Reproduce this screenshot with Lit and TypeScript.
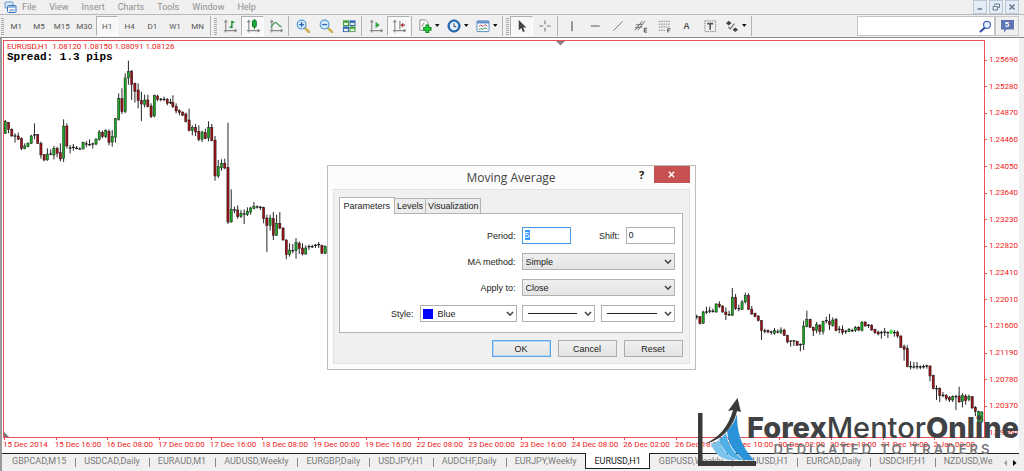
import { LitElement, html, svg, css } from "lit";
import { customElement, query } from "lit/decorators.js";
import { classMap } from "lit/directives/class-map.js";

type Kind = "r" | "g" | "d" | "l";
interface Run {
  x: number;
  y: number;
  bars: string;
}

/* Each bar: kind, body top, body bottom, wick top, wick bottom (thirds of a unit from the run's origin). */
const RUNS: Run[] = [
  {
    x: 5.3,
    y: 40,
    bars:
      "g245,280,240,282 r247,268,246,280 r268,288,265,290 d288,288,280,308 r288,298,278,300 r296,326,292,330 g318,326,310,328 g309,320,308,322 g288,310,284,312 d285,285,250,298 r283,310,282,312 r310,345,305,356 r344,360,342,364 g342,360,325,362 d342,342,328,346 g325,345,318,358 r325,340,320,352 r338,357,310,364 g258,355,238,366 r258,318,250,325 d324,324,315,340 d322,322,312,332 d325,325,318,328 d327,327,322,330 g307,327,305,328 d312,312,303,322 d314,314,298,318 d312,312,308,326 g297,312,295,316 g276,298,270,302 r277,290,272,294 g272,290,268,294 r274,308,268,316 g290,306,270,320 g236,292,234,308 g176,238,160,242 r176,215,145,222 g114,215,100,220 g94,114,62,134 r94,134,90,180 r130,154,128,188 r150,182,130,205 r182,192,155,243 g180,194,164,202 r180,200,164,202 r198,230,190,234 g166,228,164,232 r168,178,164,184 d178,178,174,184 d178,178,170,184 r178,190,174,196 d188,188,176,192",
  },
  {
    x: 172.9,
    y: 80,
    bars:
      "r68,80,46,84 r79,93,70,100 r92,97,88,106 r96,106,94,108 r102,124,98,128 r120,152,86,154 g142,152,136,166 r142,156,132,168 r154,178,136,184 g156,178,152,186 r158,176,146,178 g142,174,124,184 r142,182,132,184 r180,288,168,302 g260,288,240,294 g250,264,238,272 r250,264,236,268 r262,426,128,432 g388,426,328,428 d390,390,380,400 r390,410,376,416 g400,410,390,414 d402,402,388,432 g394,404,382,408 g384,396,380,404 g380,386,366,388 d381,381,376,386 d382,382,378,390 r382,416,380,430 r414,436,404,516 g414,436,404,452 r416,466,396,480 g430,466,404,468 r430,444,396,448 r444,480,442,482 r480,524,478,538 g510,524,490,530 d512,512,492,520 g488,512,474,536 r490,506,484,522 r504,522,490,526 g504,522,496,524 d500,500,494,510 d500,500,494,504 d496,496,492,504 d494,494,486,504 r496,520,494,522 g500,520,496,522",
  },
  {
    x: 696.7,
    y: 270,
    bars:
      "d140,140,134,148 r140,160,138,164 g126,160,122,162 d126,126,110,132 d123,123,110,130 d124,124,116,128 g102,126,100,128 r102,110,94,114 r108,126,106,128 r126,134,112,150 d134,134,122,138 g82,136,54,138 r82,116,72,120 d116,116,104,124 g96,118,90,120 g76,96,68,100 r76,118,70,120 r118,132,108,134 r130,140,128,142 r138,152,136,154 r152,182,150,210 d183,183,176,190 r182,186,178,190 d186,186,182,194 g182,190,174,194 d186,186,178,190 g180,188,172,192 r180,196,176,198 r196,216,194,220 d213,213,212,230 d213,213,210,228 r214,226,212,228 d224,224,220,244 g168,224,152,240 g148,170,122,172 r148,172,146,174 r172,182,170,198 g164,182,156,190 r166,184,162,194 g154,184,152,194 d152,152,140,160 r154,164,132,180 g150,166,142,170 r148,182,144,184 d178,178,168,190 r178,188,166,194 d184,184,180,192 g178,184,174,186 d182,182,176,186 g172,182,168,186 r172,180,168,184 g156,182,154,184 r156,168,154,170 d166,166,162,174",
  },
  {
    x: 871.7,
    y: 300,
    bars:
      "r76,90,72,92 r88,98,86,102 r96,102,92,106 d98,98,92,116 d96,96,84,108 d98,98,94,114 l92,100,88,102 d98,98,90,110 r96,108,92,114 r108,142,106,144 r140,148,134,182 r146,200,136,202 d200,200,184,208 d201,201,186,206 d200,200,186,208 d201,201,196,208 d200,200,194,206 d198,198,194,206 r198,228,196,244 r226,266,224,268 d266,266,256,300 r266,286,262,306 d286,286,276,292 r286,296,282,302 r292,300,288,306 g290,300,286,306 d290,290,284,330 r288,306,260,308 g286,304,280,322 r288,302,282,314 g290,298,284,304 r290,324,288,326 r322,334,318,348 g334,366,332,368 g336,364,334,368",
  },
];

const STEP = 3.24;
const FILL: Record<Kind, string> = { r: "#9c1317", g: "#19a822", d: "#000", l: "#2fdc3a" };

const candles = RUNS.flatMap((run) =>
  run.bars.split(" ").map((bar, i) => {
    const kind = bar[0] as Kind;
    const [top, bottom, high, low] = bar.slice(1).split(",").map((n) => run.y + Number(n) / 3);
    const x = run.x + i * STEP;
    const edge = kind === "l" ? "#2fdc3a" : "#111";
    return svg`
      <line x1=${x} x2=${x} y1=${high} y2=${low} stroke=${edge} stroke-width="0.9"></line>
      ${kind === "d"
        ? svg`<line x1=${x - 1.4} x2=${x + 1.4} y1=${top} y2=${top} stroke="#111" stroke-width="1.2"></line>`
        : svg`<rect x=${x - 1.1} y=${top} width="2.2" height=${Math.max(bottom - top, 1)}
              fill=${FILL[kind]} stroke=${edge} stroke-width="0.45"></rect>`}`;
  })
);

const PRICES = [
  "1.25690", "1.25280", "1.24870", "1.24460", "1.24050", "1.23640", "1.23230", "1.22820",
  "1.22410", "1.22010", "1.21600", "1.21190", "1.20780", "1.20370", "1.19960",
];
const TIMES = [
  "15 Dec 2014", "15 Dec 16:00", "16 Dec 08:00", "17 Dec 00:00", "17 Dec 16:00", "18 Dec 08:00",
  "19 Dec 00:00", "19 Dec 16:00", "22 Dec 08:00", "23 Dec 00:00", "23 Dec 16:00", "24 Dec 08:00",
  "26 Dec 02:00", "26 Dec 18:00", "29 Dec 10:00", "30 Dec 02:00", "30 Dec 18:00", "31 Dec 10:00",
  "2 Jan 03:00",
];
const TABS = [
  "GBPCAD,M15", "USDCAD,Daily", "EURAUD,M1", "AUDUSD,Weekly", "EURGBP,Daily", "USDJPY,H1",
  "AUDCHF,Daily", "EURJPY,Weekly", "EURUSD,H1", "GBPUSD,Weekly", "XAUUSD,H1", "EURCAD,Daily",
  "USDCHF,H1", "NZDUSD,We",
];
const MENUS = ["File", "View", "Insert", "Charts", "Tools", "Window", "Help"];
const FRAMES = ["M1", "M5", "M15", "M30", "H1", "H4", "D1", "W1", "MN"];

const axes = svg`<path d="M3 1.5v13M1 12.500h13.500M1.500 3.500 3 1.500l1.500 2M12.500 11l2 1.500-2 1.500" fill="none" stroke="#8a8a8a" stroke-width="1.2"/>`;

const ICONS = {
  bars: svg`${axes}<path d="M9.500 2v8M9.500 3.500h2.500M7 8.500h2.500" fill="none" stroke="#1b8c33" stroke-width="1.500"/>`,
  candle: svg`${axes}<path d="M9 0v11" stroke="#0d6b20"/><rect x="7" y="1.500" width="4" height="7" rx="1" fill="#18b03a" stroke="#0d6b20"/>`,
  line: svg`${axes}<path d="M2 9C5 3.500 7 3 9 5s2.500 3 4.500 3.500" fill="none" stroke="#4b9a5c" stroke-width="1.300"/>`,
  zoomIn: svg`<path d="m9.500 9.500 4.500 4.500" stroke="#d0b34f" stroke-width="3" stroke-linecap="round"/><circle cx="6" cy="6" r="4.700" fill="#d9ecfa" stroke="#5b9bd8" stroke-width="1.300"/><path d="M6 3.300v5.400M3.300 6h5.400" stroke="#2f6dba" stroke-width="1.500"/>`,
  zoomOut: svg`<path d="m9.500 9.500 4.500 4.500" stroke="#d0b34f" stroke-width="3" stroke-linecap="round"/><circle cx="6" cy="6" r="4.700" fill="#d9ecfa" stroke="#5b9bd8" stroke-width="1.300"/><path d="M3.300 6h5.400" stroke="#2f6dba" stroke-width="1.500"/>`,
  tile: svg`<rect x="1" y="1.500" width="6.500" height="6" fill="#3e9e33"/><rect x="8" y="1.500" width="6.500" height="6" fill="#2c5fb4"/><rect x="1" y="8" width="6.500" height="6" fill="#2c5fb4"/><rect x="8" y="8" width="6.500" height="6" fill="#3e9e33"/><path d="M2 4h4.500v2.500H2zM9 4h4.500v2.500H9zM2 10.500h4.500V13H2zM9 10.500h4.500V13H9z" fill="#e3efdf"/>`,
  scroll: svg`${axes}<path d="M7 3v7l4.500-3.500z" fill="#2da544"/>`,
  shift: svg`${axes}<path d="M8.500 2v9" stroke="#666"/><path d="M14 6.500h-3" stroke="#a33" stroke-width="1.300"/><path d="M12 4v5L9 6.500z" fill="#a8323a"/>`,
  add: svg`<path d="M2 1h6l2.500 2.500V12H2z" fill="#fff" stroke="#888"/><path d="M4 8c2 0 1-4 3-4" fill="none" stroke="#777"/><path d="M10 6v9M5.500 10.500h9" stroke="#0d7e1c" stroke-width="4"/><path d="M10 6.800v7.400M6.300 10.500h7.400" stroke="#25cc3d" stroke-width="2.200"/>`,
  clock: svg`<circle cx="7.500" cy="7.500" r="6.500" fill="#2873c4" stroke="#174d96"/><circle cx="7.500" cy="7.500" r="4.500" fill="#e8f3fc"/><path d="M7.500 4.500v3.300l2.500.700" fill="none" stroke="#345" stroke-width="1.100"/>`,
  template: svg`<rect x="1" y="2" width="13" height="11.500" rx="1" fill="#f7fbff" stroke="#5683bd"/><path d="M1 3.500h13" stroke="#5c8fd0" stroke-width="2.500"/><path d="m3 8 2-1.500L7.500 8l2-2 2.500 1.500" fill="none" stroke="#b44" /><path d="m3 11.500 2-1 2.500.500 2-1.500 2.500 1.500" fill="none" stroke="#2a9440"/>`,
  cursor: svg`<path d="M4 1v11l2.700-2.300L8.500 14l2-1-1.800-4h3.500z" fill="#444"/>`,
  cross: svg`<path d="M7.500 1.500v4M7.500 9.500v4M1.500 7.500h4M9.500 7.500h4" stroke="#777" stroke-width="1.200"/>`,
  vline: svg`<path d="M7.500 2.500v10.500" stroke="#555" stroke-width="1.200"/>`,
  hline: svg`<path d="M3 7.500h9.500" stroke="#666" stroke-width="1.200"/>`,
  trend: svg`<path d="m2.500 12.500 10-10" stroke="#777"/>`,
  channel: svg`<path d="m1 12 8-10M4 12l8-10M2 6.500l7-1M1 9.500l8-1" stroke="#666"/><path d="M14 10h-3v4h3M11 12h2.500" fill="none" stroke="#444"/>`,
  fibo: svg`<path d="M2 2.500h11.500M2 5.500h11.500M2 8.500h11.500M2 12h7" stroke="#777" stroke-dasharray="1.500 1"/><path d="M11.500 14.500V10.500h3M11.500 12.500h2" fill="none" stroke="#444"/>`,
  label: svg`<rect x="2" y="2" width="11.500" height="11.500" fill="none" stroke="#777" stroke-dasharray="1.500 1"/><path d="M4.500 5h6.500M7.700 5v6.500" stroke="#555" stroke-width="1.700"/>`,
  arrows: svg`<path d="M4 2 7 4.500 4 7 1 4.500zM11 9l3 2.500-3 2.500-3-2.500z" fill="#444"/><path d="m3.500 8.500 2 2L10 5" fill="none" stroke="#666" stroke-width="1.200"/>`,
};

const chevron = html`<svg class="chevron" viewBox="0 0 8 6" aria-hidden="true">
  <path d="m1 1 3 3.200L7 1" fill="none" stroke="#444" stroke-width="1.600" />
</svg>`;

@customElement("mt-menu-bar")
class MtMenuBar extends LitElement {
  static styles = css`
    :host { display: block; font: 9px/14px Roboto, sans-serif; color: #8f8f8f; background: #f0f0f0; }
    .bar { display: flex; align-items: center; height: 14px; padding: 0 5px 0 4px; border-bottom: 1px solid #b8b8b8; }
    .logo { width: 13px; height: 13px; margin-right: 5px; }
    .item { padding: 0; margin-right: 13px; border: 0; background: none; font: inherit; color: inherit; }
    .grow { flex: 1; }
    .win { box-sizing: border-box; display: grid; place-items: center; width: 14px; height: 14px; margin-left: 2px; padding: 0; border: 1px solid #b9c8d6; background: #e4edf5; }
    .win svg { width: 8px; height: 8px; }
  `;
  render() {
    return html`<nav class="bar">
      <svg class="logo" viewBox="0 0 13 13" aria-hidden="true">
        <rect x="1" y="1" width="8" height="6" rx="1" fill="#dcebfa" stroke="#5d95cf" />
        <rect x="3.500" y="4.500" width="8.500" height="7" rx="1" fill="#fff" stroke="#3878bd" />
        <path d="M4 6h7.500M6 8.500v2M8 8v2.500M10 8.500v1.500" stroke="#3878bd" />
      </svg>
      ${MENUS.map((m) => html`<button class="item">${m}</button>`)}
      <span class="grow"></span>
      <button class="win" aria-label="Minimize"><svg viewBox="0 0 8 8"><path d="M1.500 6h4.500" stroke="#667a8d" stroke-width="1.500" /></svg></button>
      <button class="win" aria-label="Restore"><svg viewBox="0 0 8 8"><path d="M2.500 2.500V1h5v3.500H6M1 3.500h4.500V7H1z" fill="none" stroke="#667a8d" /></svg></button>
      <button class="win" aria-label="Close"><svg viewBox="0 0 8 8"><path d="m1.500 1.500 5 5m0-5-5 5" stroke="#667a8d" stroke-width="1.600" /></svg></button>
    </nav>`;
  }
}

@customElement("mt-toolbar")
class MtToolbar extends LitElement {
  static styles = css`
    :host { display: block; background: #f0f0f0; font: 8px/20px Roboto, sans-serif; color: #555; }
    .bar { display: flex; align-items: center; height: 22px; padding-right: 5px; border-bottom: 1px solid #8c8c8c; }
    .grip { flex: none; width: 3px; height: 17px; margin: 0 1px; background: repeating-linear-gradient(#aaa 0 1px, #f0f0f0 1px 2px); }
    .frames { display: flex; width: 204px; }
    .frames button { flex: 1; }
    button { box-sizing: border-box; height: 20px; padding: 0; border: 1px solid transparent; background: none; font: inherit; color: inherit; }
    .on { border-color: #b0b0b0 #fff #fff #b0b0b0; background: #f8f8f8; }
    .tool { display: grid; place-items: center; width: 23px; }
    .drop { display: flex; align-items: center; width: 29px; padding-left: 3px; }
    .tool svg, .drop .ico { width: 14px; height: 14px; }
    .drop .arrow { width: 6px; height: 4px; margin-left: 2px; }
    .letter { font: bold 9px/18px "Liberation Sans", sans-serif; color: #555; }
    .sep { flex: none; width: 1px; height: 20px; margin: 0 2px 0 1px; background: #b4b4b4; }
    .grow { flex: 1; }
    .search { display: flex; align-items: center; width: 138px; height: 20px; box-sizing: border-box; background: #fff; border: 1px solid #c4c4c4; }
    .search input { flex: 1; min-width: 0; border: 0; padding: 0 3px; outline: 0; font: inherit; background: none; }
    .search svg { width: 13px; height: 13px; margin-right: 2px; }
    .chat { display: grid; place-items: center; width: 24px; border-color: #c8c8c8; }
    .chat svg { grid-area: 1 / 1; width: 15px; height: 14px; }
    .chat span { grid-area: 1 / 1; font: bold 8px/10px Roboto, sans-serif; color: #fff; align-self: start; margin-top: 3px; }
  `;
  tool(name: keyof typeof ICONS, label: string, on = false) {
    return html`<button class=${classMap({ tool: true, on })} aria-label=${label}>
      <svg viewBox="0 0 15 15">${ICONS[name]}</svg>
    </button>`;
  }
  drop(name: keyof typeof ICONS, label: string) {
    return html`<button class="drop" aria-label=${label}>
      <svg class="ico" viewBox="0 0 15 15">${ICONS[name]}</svg>
      <svg class="arrow" viewBox="0 0 6 4"><path d="M1 0h4.500L3.200 3z" fill="#111" /></svg>
    </button>`;
  }
  render() {
    const sep = html`<span class="sep"></span>`;
    const grip = html`<span class="grip"></span>`;
    return html`<div class="bar" role="toolbar">
      ${grip}
      <div class="frames">${FRAMES.map((f) => html`<button class=${classMap({ on: f === "H1" })}>${f}</button>`)}</div>
      ${sep}${grip}
      ${this.tool("bars", "Bar chart")}${this.tool("candle", "Candlesticks", true)}${this.tool("line", "Line chart")}
      ${sep}
      ${this.tool("zoomIn", "Zoom in")}${this.tool("zoomOut", "Zoom out")}${this.tool("tile", "Tile windows")}
      ${sep}
      ${this.tool("scroll", "Auto scroll")}${this.tool("shift", "Chart shift", true)}
      ${sep}
      ${this.drop("add", "Indicators")}${this.drop("clock", "Periods")}${this.drop("template", "Templates")}
      ${sep}${grip}
      ${this.tool("cursor", "Cursor", true)}${this.tool("cross", "Crosshair")}
      ${sep}
      ${this.tool("vline", "Vertical line")}${this.tool("hline", "Horizontal line")}${this.tool("trend", "Trendline")}
      ${this.tool("channel", "Channel")}${this.tool("fibo", "Fibonacci")}
      <button class="tool letter">A</button>
      ${this.tool("label", "Text label")}${this.drop("arrows", "Arrows")}
      ${sep}
      <span class="grow"></span>
      <label class="search">
        <input type="text" aria-label="Search" />
        <svg viewBox="0 0 13 13" aria-hidden="true">
          <path d="m6 7.500-4.500 4" stroke="#2c4fa0" stroke-width="2" stroke-linecap="round" />
          <circle cx="8" cy="4.800" r="3.500" fill="#e9f2fc" stroke="#3f68c0" stroke-width="1.300" />
        </svg>
      </label>
      <button class="chat" aria-label="Messages">
        <svg viewBox="0 0 15 14"><path d="M1 1h13v9.500H6.500L4 13.500v-3H1z" fill="#5f74b3" /></svg>
        <span>5</span>
      </button>
    </div>`;
  }
}

@customElement("mt-chart")
class MtChart extends LitElement {
  static styles = css`
    :host { display: flex; flex-direction: column; flex: 1; min-height: 0; font: 8px/10px Roboto, sans-serif; color: #f01818; background: #fff; }
    .chart { flex: 1; min-height: 0; display: grid; grid-template: minmax(0, 1fr) 15px / minmax(0, 1fr) 34px; padding: 2px 0 0 1px; }
    .plot { display: grid; grid-template: minmax(0, 1fr) / minmax(0, 1fr); border: 1px solid #e8505a; }
    .plot > * { grid-area: 1 / 1; }
    .bars { width: 100%; height: 100%; overflow: visible; }
    .info { align-self: start; justify-self: start; padding: 1px 0 0 3px; }
    .spread { font: bold 11px/11px "Liberation Mono", monospace; color: #000; margin: 0; }
    .quote { display: flex; gap: 4px; margin: 0; }
    .prices { display: flex; flex-direction: column; justify-content: space-between; margin: 0; padding: 15px 0 0; list-style: none; }
    .prices li { display: flex; align-items: center; gap: 2px; }
    .prices li::before { content: ""; width: 2px; height: 1px; background: #e8505a; }
    .times { display: flex; margin: 0; padding: 0; list-style: none; white-space: nowrap; }
    .times li { flex: 1; min-width: 0; }
    .times li::before { content: ""; display: block; width: 1px; height: 2px; margin-left: 1px; background: #e8505a; }
  `;
  render() {
    return html`<div class="chart">
      <div class="plot">
        <svg class="bars" viewBox="4 41 980 396" preserveAspectRatio="none" role="img" aria-label="Price chart">
          ${candles}
          <path d="M556 41h9l-4.500 4.500z" fill="#8b7f84" />
          <path d="M4 432v5h5z" fill="#777" />
        </svg>
        <div class="info">
          <p class="quote"><span>EURUSD,H1</span><span>1.08120 1.08150 1.08091 1.08126</span></p>
          <p class="spread">Spread: 1.3 pips</p>
        </div>
      </div>
      <ul class="prices">${PRICES.map((p) => html`<li>${p}</li>`)}</ul>
      <ul class="times">${TIMES.map((t) => html`<li>${t}</li>`)}</ul>
    </div>`;
  }
}

@customElement("mt-dialog")
class MtDialog extends LitElement {
  static styles = css`
    :host { display: block; width: 369px; font: 9px/12px "Liberation Sans", sans-serif; color: #222; }
    .dialog { box-sizing: border-box; padding: 0 5px 5px; background: #fcfcfc; border: 1px solid #bdbdbd; }
    .head { display: grid; grid-template-columns: 1fr auto 1fr; height: 23px; }
    .title { grid-column: 2; margin: 0; font: 12px/24px "Open Sans", sans-serif; color: #444; }
    .tools { display: flex; justify-content: flex-end; align-items: start; }
    .help { width: 18px; height: 17px; padding: 0; margin-right: 3px; border: 0; background: none; font: bold 11px/17px "Open Sans", sans-serif; color: #111; }
    .close { display: grid; place-items: center; width: 36px; height: 17px; padding: 0; border: 0; background: #c75050; }
    .close svg { width: 7px; height: 7px; }
    .body { padding: 7px 6px 6px 5px; background: #f0f0f0; border: 1px solid #e2e2e2; }
    .tabs { display: flex; align-items: flex-end; height: 16px; }
    .tab { box-sizing: border-box; height: 15px; padding: 0 2px; border: 1px solid #b4b4b4; border-width: 1px 1px 0 0; background: #ececec; font: inherit; line-height: 14px; color: inherit; }
    .tab.on { height: 17px; margin-bottom: -1px; padding: 0 4px 1px; border-width: 1px 1px 0; background: #fff; }
    .panel { display: grid; gap: 9px; padding: 13px 7px 10px; background: #fff; border: 1px solid #b4b4b4; }
    .row { display: flex; justify-content: flex-end; align-items: center; height: 17px; }
    .row > label { margin-right: 6px; }
    .fields { display: flex; align-items: center; justify-content: space-between; width: 153px; }
    .pair { display: flex; align-items: center; gap: 6px; }
    input, select { box-sizing: border-box; height: 17px; margin: 0; border: 1px solid #b0b0b0; border-radius: 0; background: #fff; font: inherit; color: inherit; outline: 0; }
    input { width: 49px; padding: 0 2px 1px; }
    input:focus { border-color: #4a96e0; }
    input::selection { background: #3399ff; color: #fff; }
    select { appearance: none; width: 100%; padding: 0 12px 0 3px; }
    .box { display: grid; align-items: center; flex: 1; }
    .box > * { grid-area: 1 / 1; }
    .box.tone { flex: none; width: 97px; margin-right: 5px; }
    .tone select { padding-left: 17px; }
    .filled select { background: linear-gradient(#efefef, #e4e4e4); }
    .chevron { justify-self: end; width: 8px; height: 6px; margin-right: 3px; pointer-events: none; }
    .swatch { width: 10px; height: 10px; margin-left: 3px; background: #0000ff; pointer-events: none; }
    .rule { height: 1px; margin: 0 18px 0 6px; background: #222; pointer-events: none; }
    .lines { gap: 6px; }
    .actions { display: flex; justify-content: flex-end; gap: 7px; padding-top: 7px; }
    .actions button { width: 59px; height: 17px; padding: 0; border: 1px solid #adadad; background: linear-gradient(#f0f0f0, #e4e4e4); font: inherit; color: inherit; }
    .actions .main { border-color: #5aa5ee; box-shadow: inset 0 0 0 1px #b5d8fa; }
  `;
  @query("#period") period!: HTMLInputElement;
  firstUpdated() {
    this.period.focus();
    this.period.select();
  }
  render() {
    return html`<section class="dialog" role="dialog" aria-labelledby="title">
      <header class="head">
        <h1 class="title" id="title">Moving Average</h1>
        <div class="tools">
          <button class="help">?</button>
          <button class="close" aria-label="Close"><svg viewBox="0 0 7 7"><path d="m.800.800 5.400 5.400m0-5.400L.800 6.200" stroke="#fff" stroke-width="1.400" /></svg></button>
        </div>
      </header>
      <div class="body">
        <div class="tabs" role="tablist">
          <button class="tab on" role="tab">Parameters</button>
          <button class="tab" role="tab">Levels</button>
          <button class="tab" role="tab">Visualization</button>
        </div>
        <div class="panel">
          <div class="row">
            <label for="period">Period:</label>
            <div class="fields">
              <input id="period" type="text" value="5" />
              <div class="pair"><label for="shift">Shift:</label><input id="shift" type="text" value="0" /></div>
            </div>
          </div>
          <div class="row">
            <label for="method">MA method:</label>
            <div class="fields"><div class="box filled"><select id="method"><option>Simple</option></select>${chevron}</div></div>
          </div>
          <div class="row">
            <label for="apply">Apply to:</label>
            <div class="fields"><div class="box filled"><select id="apply"><option>Close</option></select>${chevron}</div></div>
          </div>
          <div class="row">
            <label for="colour">Style:</label>
            <div class="box tone"><select id="colour"><option>Blue</option></select><span class="swatch"></span>${chevron}</div>
            <div class="fields lines">
              <div class="box"><select aria-label="Line type"><option></option></select><span class="rule"></span>${chevron}</div>
              <div class="box"><select aria-label="Line width"><option></option></select><span class="rule"></span>${chevron}</div>
            </div>
          </div>
        </div>
        <div class="actions">
          <button class="main">OK</button><button>Cancel</button><button>Reset</button>
        </div>
      </div>
    </section>`;
  }
}

@customElement("brand-mark")
class BrandMark extends LitElement {
  static styles = css`
    :host { display: flex; align-items: flex-end; pointer-events: none; }
    .mark { width: 60px; height: 68px; flex: none; }
    .words { margin: 0 0 9px -11px; text-align: center; }
    .name { margin: 0; font: 500 29px/28px Inter, sans-serif; color: #404244; white-space: nowrap; }
    .name b { font-weight: 800; }
    .tag { display: block; font: 600 13px/15px Inter, sans-serif; color: #77797b; letter-spacing: 3px; white-space: nowrap; }
  `;
  render() {
    return html`<svg class="mark" viewBox="0 0 60 68" aria-hidden="true">
        <path d="M0 15h4.500v48H58v5H0z" fill="#3a3a3a" />
        <path d="M13 46c4-1 6-3 8-4 3 10 9 16 18 20H31C21 60 16 54 13 46z" fill="#7cc4ee" />
        <path d="M21 41c4-2 5-4 7-6 2 12 8 21 18 27h-6C30 58 24 51 21 41z" fill="#4fb0e8" />
        <path d="M29 33c5-5 8-10 10-17 0 18 4 33 17 46h-9C36 55 30 46 29 33z" fill="#2a92d8" />
        <path d="M6 46C20 41 31 28 35 12l-5 1L39.500 0 43 14l-4-1C35 31 22 43 6 46z" fill="#3a3a3a" />
      </svg>
      <div class="words">
        <p class="name"><b>Forex</b>Mentor<b>Online</b></p>
        <span class="tag">DEDICATED TO TRADERS</span>
      </div>`;
  }
}

@customElement("app-root")
class AppRoot extends LitElement {
  static styles = css`
    :host { display: flex; flex-direction: column; height: 100vh; overflow: hidden; background: #f0f0f0; }
    .work { position: relative; flex: 1; min-height: 0; display: flex; flex-direction: column; margin-right: 5px; border-left: 2px solid #9a9a9a; }
    .dialog { position: absolute; top: 127px; left: calc(50% - 184px); }
    .brand { position: absolute; right: 0; bottom: 5px; }
    .tabs { display: flex; height: 17px; padding-left: 1px; border-top: 1px solid #222; font: 9px/15px Roboto, sans-serif; color: #7a7a7a; background: #f0f0f0; }
    .tab { flex: none; height: 15px; padding: 0 9px; border: 0; background: none; font: inherit; color: inherit; }
    .tab + .tab { background: linear-gradient(#888, #888) 0 4px / 1px 9px no-repeat; }
    .tabs .on { margin-top: -1px; padding: 1px 8px 0; height: 16px; border: 1px solid #222; border-top: 0; background: #fff; color: #222; }
    .tabs .on + .tab { background: none; }
    .grow { flex: 1; }
    .nav { width: 14px; height: 15px; padding: 0; border: 0; background: none; }
    .nav svg { width: 5px; height: 6px; }
  `;
  render() {
    return html`
      <mt-menu-bar></mt-menu-bar>
      <mt-toolbar></mt-toolbar>
      <main class="work">
        <mt-chart></mt-chart>
        <nav class="tabs">
          ${TABS.map((t) => html`<button class=${classMap({ tab: true, on: t === "EURUSD,H1" })}>${t}</button>`)}
          <span class="grow"></span>
          <button class="nav" aria-label="Previous"><svg viewBox="0 0 5 6"><path d="M4 0v6L1 3z" fill="#999" /></svg></button>
          <button class="nav" aria-label="Next"><svg viewBox="0 0 5 6"><path d="M1 0v6l3.500-3z" fill="#000" /></svg></button>
        </nav>
        <mt-dialog class="dialog"></mt-dialog>
        <brand-mark class="brand"></brand-mark>
      </main>
    `;
  }
}
